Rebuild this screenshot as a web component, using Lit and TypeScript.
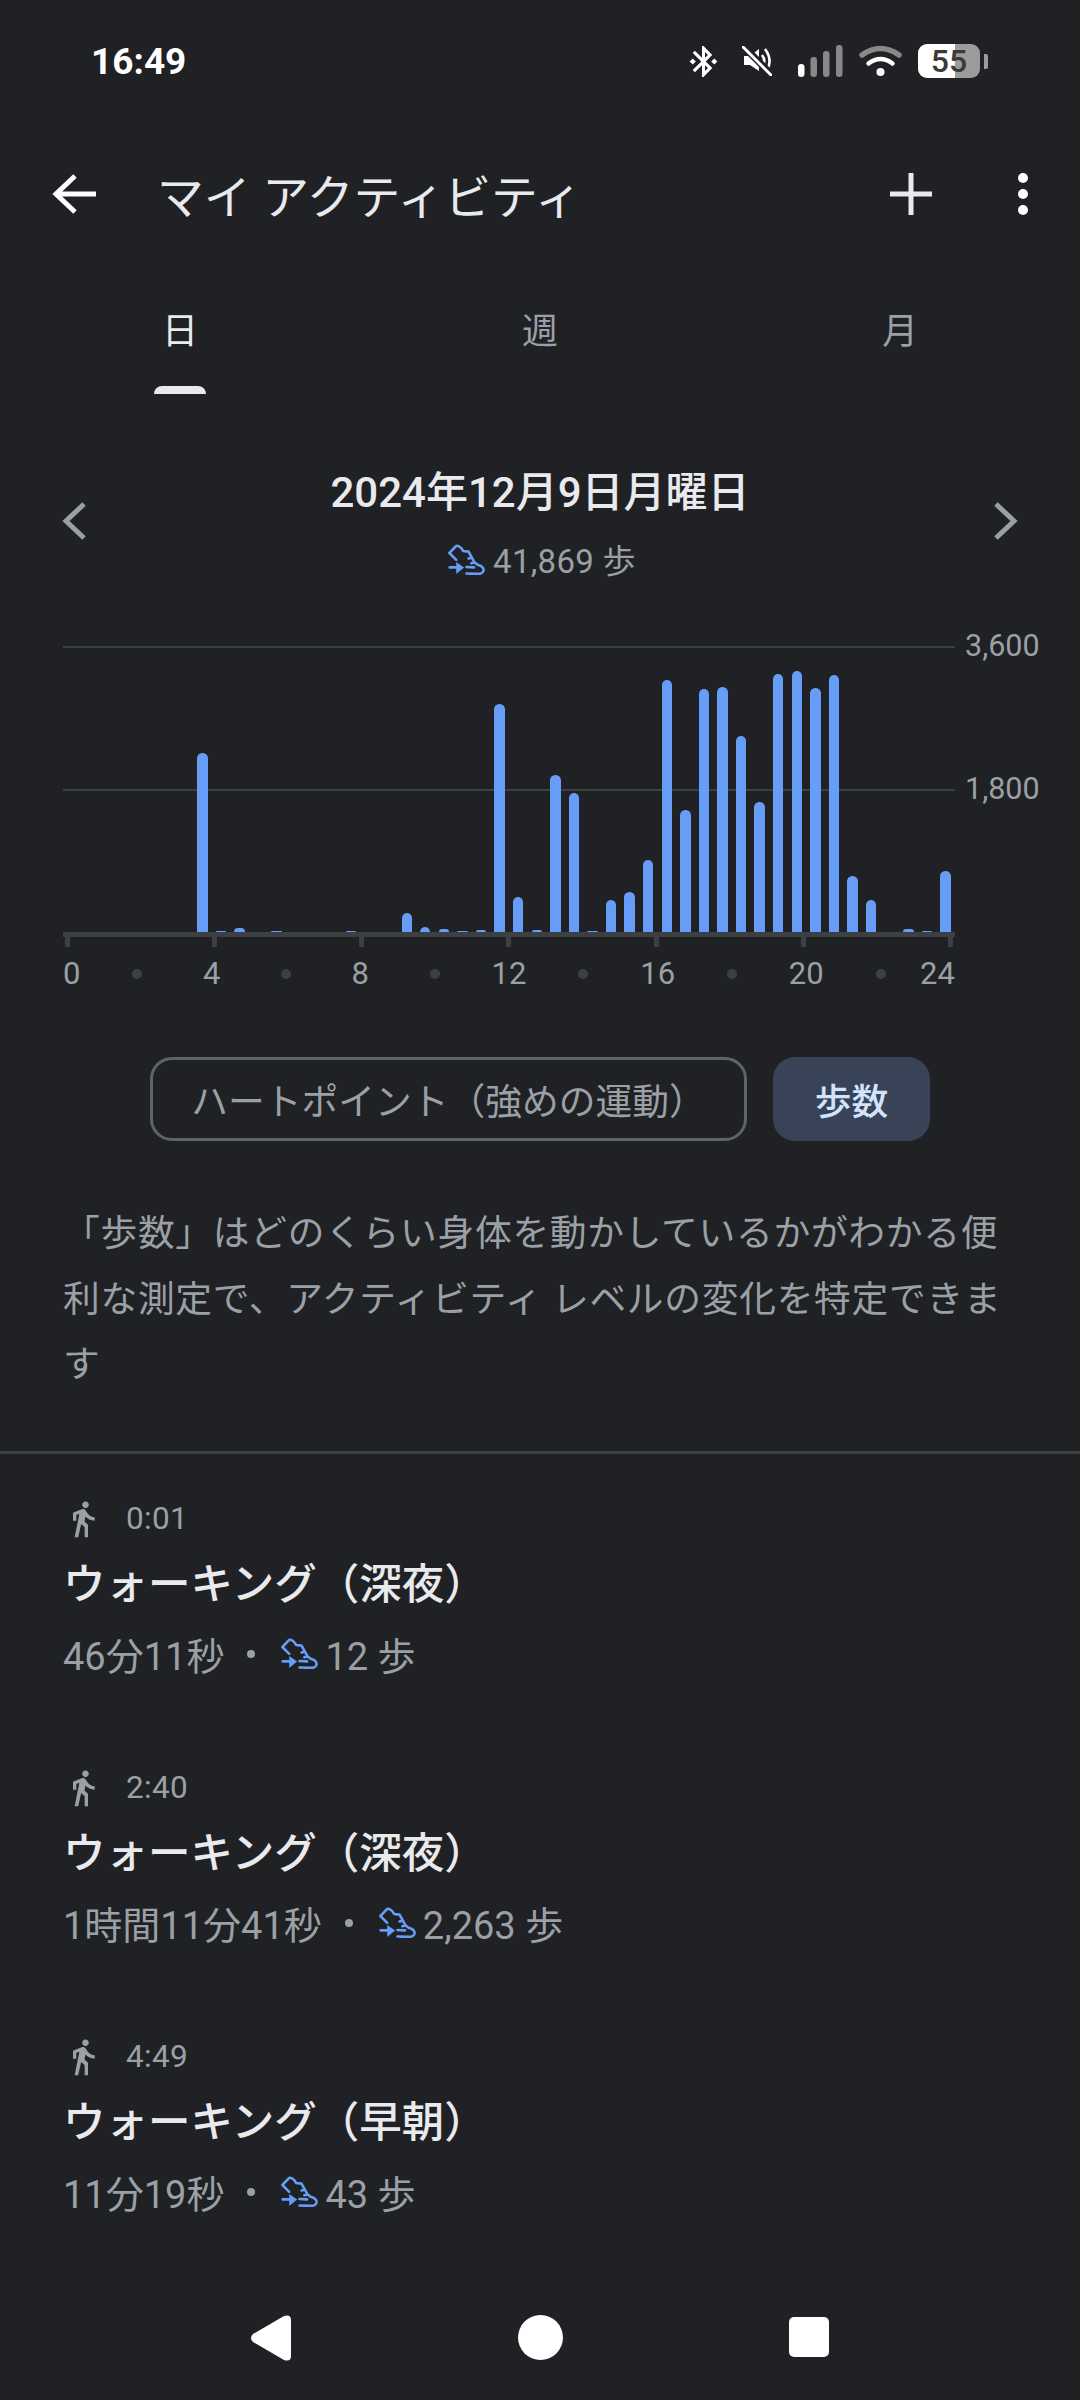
import { LitElement, html, css, svg } from 'lit'
import { customElement } from 'lit/decorators.js'

// half-hour step counts, as pixel heights on a 286px plot
const BARS = [
  0, 0, 0, 0, 0, 0, 0, 179, 1, 4, 0, 1, 0, 0, 0, 1,
  0, 0, 19, 5, 3, 1, 2, 228, 35, 2, 157, 139, 1, 32, 40, 72,
  252, 122, 243, 245, 196, 130, 258, 261, 244, 257, 56, 32, 0, 3, 1, 61,
]

const AXIS = ['0', '', '4', '', '8', '', '12', '', '16', '', '20', '', '24']

const WALKS = [
  { time: '0:01', title: 'ウォーキング（深夜）', length: '46分11秒', steps: '12 歩' },
  { time: '2:40', title: 'ウォーキング（深夜）', length: '1時間11分41秒', steps: '2,263 歩' },
  { time: '4:49', title: 'ウォーキング（早朝）', length: '11分19秒', steps: '43 歩' },
]

const shoe = svg`
  <g fill="none" stroke="#669df6" stroke-width="7.5" stroke-linejoin="round" stroke-linecap="round">
    <path d="M24 46 L4 26 L24 5 Q36 5 44 20 L60 22 L70 40 L60 42 M70 40 L78 54 L68 56 M78 54 L86 60 Q104 64 104 76 Q102 87 88 87 L54 86 M54 67 L76 68" />
    <path d="M5 68 H30" />
  </g>
  <path d="M24 52 L47 68 L24 87 Z" fill="#669df6" />
`

@customElement('app-root')
export class AppRoot extends LitElement {
  static styles = css`
    :host {
      display: block;
      width: 1080px;
      height: 2400px;
      overflow: hidden;
      background: #202124;
      color: #e8eaed;
      font-family: Roboto, 'Noto Sans CJK JP', sans-serif;
    }

    .status {
      height: 120px;
      box-sizing: border-box;
      padding: 2px 92px 0 91px;
      display: flex;
      align-items: center;
      justify-content: space-between;
    }
    .clock {
      font-size: 37px;
      font-weight: 700;
      color: #fff;
    }
    .status-icons {
      display: flex;
      align-items: center;
    }
    .status-icons svg {
      display: block;
    }
    .mute { margin-left: 20px; }
    .signal { margin-left: 26px; }
    .wifi { margin-left: 16px; }
    .battery {
      margin-left: 16px;
      width: 62px;
      height: 34px;
      border-radius: 9px;
      background: linear-gradient(90deg, #fff 59%, #9c9c9c 59%);
      color: #3a3a3c;
      font-size: 32px;
      font-weight: 500;
      line-height: 34px;
      text-align: center;
    }
    .battery-tip {
      margin-left: 4px;
      width: 4px;
      height: 15px;
      border-radius: 0 2px 2px 0;
      background: #9c9c9c;
    }

    .appbar {
      height: 148px;
      box-sizing: border-box;
      padding: 0 0 0 52px;
      display: flex;
      align-items: center;
    }
    .appbar h1 {
      margin: 0 0 2px 59px;
      flex: 1;
      font-size: 46.8px;
      font-weight: 400;
    }
    .dots {
      margin: 0 52px 0 85px;
      display: flex;
      flex-direction: column;
      gap: 6px;
    }
    .dots span {
      width: 10px;
      height: 10px;
      border-radius: 50%;
      background: #fff;
    }

    .tabs {
      height: 126px;
      display: grid;
      grid-template-columns: repeat(3, 360px);
    }
    .tab {
      display: flex;
      flex-direction: column;
      align-items: center;
      justify-content: flex-end;
      font-size: 36px;
      color: #9aa0a6;
    }
    .tab span {
      line-height: 36px;
      margin-bottom: 44px;
    }
    .tab.on {
      color: #e8eaed;
    }
    .tab.on i {
      width: 52px;
      height: 8px;
      margin-top: -8px;
      border-radius: 8px 8px 0 0;
      background: #e8eaed;
    }
    .tab i {
      height: 8px;
      margin-top: -8px;
    }

    .day {
      padding: 77px 62px 0;
      display: flex;
      justify-content: space-between;
      align-items: flex-start;
    }
    .day svg.chev {
      margin-top: 31px;
      display: block;
    }
    .day-text {
      text-align: center;
    }
    .day-text h2 {
      margin: 0;
      font-size: 42px;
      line-height: 44px;
      font-weight: 500;
    }
    .summary {
      margin: 24px 0 0 4px;
      height: 40px;
      display: flex;
      align-items: center;
      justify-content: center;
      gap: 8px;
      font-size: 33px;
      letter-spacing: 0.3px;
      color: #9aa0a6;
    }

    .chart {
      position: relative;
      margin: 67px 0 0 63px;
      width: 892px;
    }
    .plot {
      position: relative;
      height: 286px;
      display: flex;
      align-items: flex-end;
    }
    .grid {
      position: absolute;
      left: 0;
      width: 100%;
      height: 2px;
      background: #3c4043;
    }
    .slot {
      position: relative;
      flex: 1;
      display: flex;
      justify-content: center;
      align-items: flex-end;
    }
    .bar {
      width: 10.4px;
      border-radius: 5.2px 5.2px 0 0;
      background: #669df6;
    }
    .y {
      position: absolute;
      left: 902px;
      font-size: 30.5px;
      line-height: 36px;
      color: #9aa0a6;
    }
    .axis {
      height: 5px;
      background: #3c4043;
    }
    .ticks {
      display: flex;
      justify-content: space-between;
      padding: 0 2px;
    }
    .ticks span {
      width: 5px;
      height: 10px;
      background: #3c4043;
    }
    .labels {
      margin-top: 11px;
      height: 32px;
      display: flex;
      justify-content: space-between;
      padding: 0 2px;
      font-size: 31px;
      line-height: 32px;
      color: #9aa0a6;
    }
    .labels div {
      width: 0;
      display: flex;
      justify-content: center;
      align-items: center;
    }
    .labels div:first-child {
      justify-content: flex-start;
      margin-left: -2px;
    }
    .labels div:last-child {
      justify-content: flex-end;
      margin-right: -2px;
    }
    .labels i {
      flex: none;
      width: 10px;
      height: 10px;
      border-radius: 50%;
      background: #3c4043;
    }

    .chips {
      margin-top: 67px;
      display: flex;
      justify-content: center;
      gap: 26px;
      font-size: 36.75px;
    }
    .chip {
      height: 84px;
      box-sizing: border-box;
      border-radius: 22px;
      display: flex;
      align-items: center;
      justify-content: center;
    }
    .chip.line {
      width: 597px;
      border: 3px solid #5f6368;
      color: #9aa0a6;
    }
    .chip.fill {
      width: 157px;
      background: #384357;
      color: #d2e3fc;
      font-weight: 500;
    }

    .about {
      margin: 60px 63px 0;
      font-size: 36.75px;
      letter-spacing: 0.7px;
      line-height: 65.5px;
      color: #9aa0a6;
    }
    hr {
      margin: 53px 0 0;
      border: 0;
      height: 3px;
      background: #3c4043;
    }

    .walks {
      padding: 45px 0 0 63px;
      display: flex;
      flex-direction: column;
      gap: 92px;
    }
    .when {
      height: 40px;
      display: flex;
      align-items: center;
      gap: 23px;
      font-size: 31.5px;
      letter-spacing: 0.3px;
      color: #9aa0a6;
    }
    .walk h3 {
      margin: 18px 0 0;
      font-size: 42.5px;
      line-height: 56px;
      font-weight: 500;
    }
    .meta {
      margin-top: 19px;
      height: 44px;
      display: flex;
      align-items: center;
      font-size: 38px;
      color: #9aa0a6;
    }
    .meta b {
      width: 8px;
      height: 8px;
      margin: 0 26px 0 23px;
      border-radius: 50%;
      background: #9aa0a6;
    }
    .meta svg {
      margin-right: 7px;
    }

    .nav {
      margin-top: 56px;
      height: 130px;
      padding-top: 45px;
      box-sizing: border-box;
      display: grid;
      grid-template-columns: repeat(3, 268.5px);
      justify-content: center;
      justify-items: center;
    }
    .nav svg {
      display: block;
    }
    .home {
      width: 45px;
      height: 45px;
      border-radius: 50%;
      background: #fff;
    }
    .recents {
      width: 40px;
      height: 40px;
      margin-top: 2px;
      border-radius: 5px;
      background: #fff;
    }
  `

  private shoeIcon() {
    return html`<svg width="37" height="31" viewBox="0 0 108 90">${shoe}</svg>`
  }

  private renderStatus() {
    return html`
      <div class="status">
        <span class="clock">16:49</span>
        <div class="status-icons">
          <svg width="37" height="37" viewBox="0 0 24 24" fill="#fff">
            <path d="M7 12l-2-2-2 2 2 2 2-2zm10.71-4.29L12 2h-1v7.59L6.41 5 5 6.41 10.59 12 5 17.59 6.41 19 11 14.41V22h1l5.71-5.71-4.3-4.29 4.3-4.29zM13 5.83l1.88 1.88L13 9.59V5.83zm1.88 10.46L13 18.17v-3.76l1.88 1.88zM19 10l-2 2 2 2 2-2-2-2z" />
          </svg>
          <svg class="mute" width="30" height="30" viewBox="0 0 30 30">
            <path d="M2 10 H8 L17 3 V25 L8 19 H2 Z" fill="#fff" />
            <path d="M20 9 Q24 14 21 20 M23 3 Q31 14 25 24" fill="none" stroke="#fff" stroke-width="2.6" />
            <path d="M1 0 L30 29" stroke="#202124" stroke-width="7" />
            <path d="M1 1 L29 29" stroke="#fff" stroke-width="3" stroke-linecap="round" />
          </svg>
          <svg class="signal" width="45" height="32" viewBox="0 0 45 32">
            <rect x="0" y="19" width="6.5" height="13" rx="3.2" fill="#fff" />
            <rect x="12.5" y="12" width="6.5" height="20" rx="3.2" fill="#888" />
            <rect x="25" y="6" width="6.5" height="26" rx="3.2" fill="#888" />
            <rect x="38" y="0" width="6.5" height="32" rx="3.2" fill="#888" />
          </svg>
          <svg class="wifi" width="43" height="32" viewBox="0 0 43 32">
            <path d="M3 10 Q21.500 -3 40 10" fill="none" stroke="#888" stroke-width="5.500" stroke-linecap="round" />
            <path d="M9.500 18.500 Q21.500 9.500 33.500 18.500" fill="none" stroke="#fff" stroke-width="4.500" stroke-linecap="round" />
            <circle cx="21.500" cy="27" r="4" fill="#fff" />
          </svg>
          <div class="battery">55</div>
          <div class="battery-tip"></div>
        </div>
      </div>
    `
  }

  private renderChart() {
    return html`
      <div class="chart">
        <div class="plot">
          <div class="grid" style="top: 0"></div>
          <div class="grid" style="top: 143px"></div>
          <div class="y" style="top: -18px">3,600</div>
          <div class="y" style="top: 125px">1,800</div>
          ${BARS.map(h => html`<div class="slot">${h ? html`<div class="bar" style="height: ${h}px"></div>` : ''}</div>`)}
        </div>
        <div class="axis"></div>
        <div class="ticks">${[0, 1, 2, 3, 4, 5, 6].map(() => html`<span></span>`)}</div>
        <div class="labels">
          ${AXIS.map(t => html`<div>${t ? html`<span>${t}</span>` : html`<i></i>`}</div>`)}
        </div>
      </div>
    `
  }

  render() {
    return html`
      ${this.renderStatus()}

      <div class="appbar">
        <svg width="46" height="42" viewBox="0 0 46 42" fill="none" stroke="#fff" stroke-width="5">
          <path d="M44 21 H5 M23 3 L4 21 L23 39" />
        </svg>
        <h1>マイ アクティビティ</h1>
        <svg width="44" height="44" viewBox="0 0 44 44" stroke="#e8eaed" stroke-width="5">
          <path d="M22 1 V43 M1 22 H43" />
        </svg>
        <div class="dots"><span></span><span></span><span></span></div>
      </div>

      <div class="tabs">
        <div class="tab on"><span>日</span><i></i></div>
        <div class="tab"><span>週</span><i></i></div>
        <div class="tab"><span>月</span><i></i></div>
      </div>

      <div class="day">
        <svg class="chev" width="24" height="38" viewBox="0 0 24 38" fill="none" stroke="#9aa0a6" stroke-width="5">
          <path d="M22 2 L4 19 L22 36" />
        </svg>
        <div class="day-text">
          <h2>2024年12月9日月曜日</h2>
          <div class="summary">${this.shoeIcon()}<span>41,869 歩</span></div>
        </div>
        <svg class="chev" width="24" height="38" viewBox="0 0 24 38" fill="none" stroke="#9aa0a6" stroke-width="5">
          <path d="M2 2 L20 19 L2 36" />
        </svg>
      </div>

      ${this.renderChart()}

      <div class="chips">
        <div class="chip line">ハートポイント（強めの運動）</div>
        <div class="chip fill">歩数</div>
      </div>

      <p class="about">「歩数」はどのくらい身体を動かしているかがわかる便利な測定で、アクティビティ レベルの変化を特定できます</p>
      <hr />

      <div class="walks">
        ${WALKS.map(w => html`
          <div class="walk">
            <div class="when">
              <svg width="40" height="40" viewBox="0 0 24 24" fill="#9aa0a6">
                <path d="M13.5 5.500c1.100 0 2-.9 2-2s-.9-2-2-2-2 .9-2 2 .9 2 2 2zM9.800 8.900L7 23h2.100l1.800-8 2.100 2v6h2v-7.500l-2.100-2 .6-3C14.800 12 16.800 13 19 13v-2c-1.900 0-3.500-1-4.300-2.400l-1-1.600c-.4-.6-1-1-1.700-1-.3 0-.5.1-.8.1L6 8.300V13h2V9.600l1.800-.7" />
              </svg>
              <span>${w.time}</span>
            </div>
            <h3>${w.title}</h3>
            <div class="meta">
              <span>${w.length}</span><b></b>
              ${this.shoeIcon()}<span>${w.steps}</span>
            </div>
          </div>
        `)}
      </div>

      <div class="nav">
        <svg width="42" height="46" viewBox="0 0 42 46" fill="#fff">
          <path d="M2 19 L33 1 Q40 -1 40 5 V41 Q40 47 33 45 L2 27 Q-2 23 2 19 Z" />
        </svg>
        <div class="home"></div>
        <div class="recents"></div>
      </div>
    `
  }
}
